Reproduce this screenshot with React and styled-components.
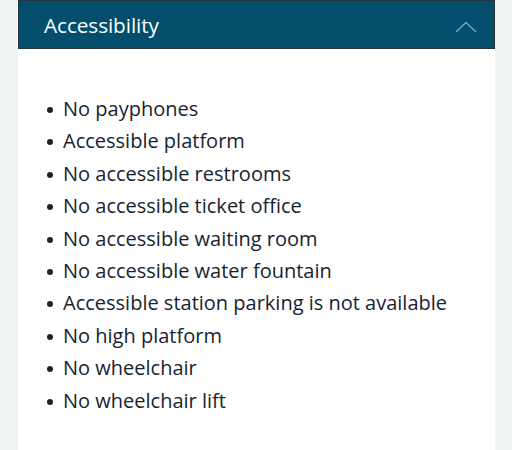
import styled, { createGlobalStyle } from "styled-components";

const GlobalStyle = createGlobalStyle`
  html, body {
    margin: 0;
    padding: 0;
    background: #f1f4f5;
    font-family: "Open Sans", "Liberation Sans", sans-serif;
  }
`;

const items = [
  "No payphones",
  "Accessible platform",
  "No accessible restrooms",
  "No accessible ticket office",
  "No accessible waiting room",
  "No accessible water fountain",
  "Accessible station parking is not available",
  "No high platform",
  "No wheelchair",
  "No wheelchair lift",
];

const Page = styled.div`
  padding: 0 17px 0 18px;
  height: 450px;
  overflow: hidden;
`;

const Panel = styled.section`
  background: #ffffff;
  min-height: 450px;
`;

const Header = styled.button`
  display: flex;
  align-items: center;
  justify-content: space-between;
  width: 100%;
  height: 49px;
  padding: 0 18px 0 26px;
  margin: 0;
  background: #034e6c;
  border: 0;
  outline: 1px dotted #1c2a33;
  outline-offset: -1px;
  color: #ffffff;
  font-family: inherit;
  font-size: 20.8px;
  cursor: pointer;
`;

const Title = styled.span`
  letter-spacing: -0.1px;
`;

const ChevronBox = styled.span`
  display: flex;
  margin-top: 4px;
`;

const List = styled.ul`
  margin: 0;
  padding: 44px 0 0 45px;
  list-style: none;
`;

const Item = styled.li`
  position: relative;
  font-size: 20px;
  line-height: 32.4px;
  color: #17242f;

  &::before {
    content: "";
    position: absolute;
    left: -16px;
    top: 14px;
    width: 6px;
    height: 6px;
    border-radius: 50%;
    background: #17242f;
  }
`;

const Chevron = () => (
  <svg width="22" height="12" viewBox="0 0 22 12" fill="none">
    <path d="M1 11 L11 1.5 L21 11" stroke="#4cb1e1" strokeWidth="1.4" />
  </svg>
);

export default function App() {
  return (
    <>
      <GlobalStyle />
      <Page>
        <Panel>
          <Header aria-expanded="true">
            <Title>Accessibility</Title>
            <ChevronBox>
              <Chevron />
            </ChevronBox>
          </Header>
          <List>
            {items.map((t) => (
              <Item key={t}>{t}</Item>
            ))}
          </List>
        </Panel>
      </Page>
    </>
  );
}
